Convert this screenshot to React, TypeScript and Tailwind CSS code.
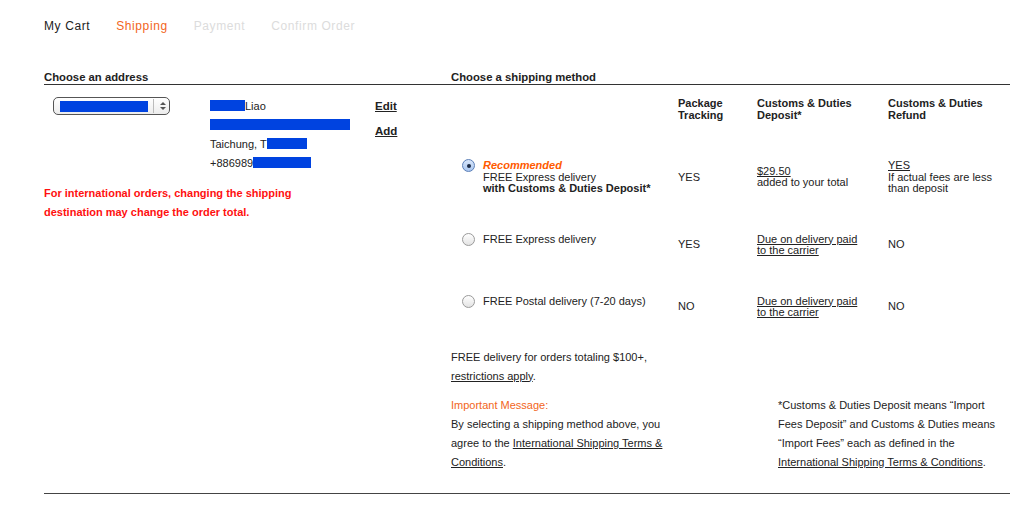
const Blur = ({ w }: { w: number }) => (
  <span className="inline-block h-[11px] bg-[#0043e0] align-[-1px]" style={{ width: w }} />
);

const Radio = ({ checked }: { checked?: boolean }) => (
  <span
    className={
      "mt-[-1px] flex h-[13px] w-[13px] shrink-0 items-center justify-center rounded-full border " +
      (checked
        ? "border-[#5b7fb8] bg-gradient-to-b from-[#d8e6fa] to-[#a9c6f0]"
        : "border-[#9a9a9a] bg-gradient-to-b from-white to-[#e3e3e3]")
    }
  >
    {checked && <span className="h-[4px] w-[4px] rounded-full bg-[#1b2a44]" />}
  </span>
);

const Select = () => (
  <div className="flex h-[18px] w-[117px] items-center rounded-[5px] border border-[#555] bg-gradient-to-b from-white to-[#ececec] pl-[6px]">
    <span className="h-[11px] w-[88px] bg-[#0043e0]" />
    <span className="ml-[5px] h-[14px] w-px bg-[#bbb]" />
    <svg width="8" height="10" viewBox="0 0 8 10" className="ml-[5px]">
      <path d="M1 4 L4 1 L7 4 Z" fill="#555" />
      <path d="M1 6 L4 9 L7 6 Z" fill="#555" />
    </svg>
  </div>
);

const Row = ({
  checked,
  option,
  tracking,
  deposit,
  refund,
}: {
  checked?: boolean;
  option: React.ReactNode;
  tracking: string;
  deposit: React.ReactNode;
  refund: React.ReactNode;
}) => (
  <>
    <div className="flex gap-[8px] self-start pl-[11px]">
      <Radio checked={checked} />
      <div>{option}</div>
    </div>
    <div>{tracking}</div>
    <div>{deposit}</div>
    <div>{refund}</div>
  </>
);

export default function App() {
  return (
    <div className="min-h-[510px] bg-white font-['Liberation_Sans',Arial,sans-serif] text-[#222]">
      <div className="ml-[44px] w-[966px]">
        <nav className="flex gap-[26px] pt-[18px] text-[12px] leading-[16px] tracking-[0.6px]">
          <span className="text-[#222]">My Cart</span>
          <span className="text-[#f26522]">Shipping</span>
          <span className="text-[#dcdcdc]">Payment</span>
          <span className="text-[#dcdcdc]">Confirm Order</span>
        </nav>

        <div className="mt-[36px] flex border-b border-[#444]">
          {/* address column */}
          <div className="w-[407px]">
            <h2 className="border-b border-[#333] text-[11.3px] font-bold leading-[14px]">Choose an address</h2>
            <div className="flex pt-[12px] text-[11px]">
              <div className="w-[166px] pl-[9px]">
                <Select />
              </div>
              <div className="w-[165px] leading-[19px]">
                <div>
                  <Blur w={35} />
                  Liao
                </div>
                <div>
                  <Blur w={140} />
                </div>
                <div>
                  Taichung, T<Blur w={40} />
                </div>
                <div>
                  +886989<Blur w={58} />
                </div>
              </div>
              <div className="text-[11.5px] font-bold leading-[19px] underline">
                <div>Edit</div>
                <div className="mt-[6px]">Add</div>
              </div>
            </div>
            <p className="mt-[11px] w-[262px] text-[11px] font-bold leading-[19px] text-[#ff1010]">
              For international orders, changing the shipping destination may change the order total.
            </p>
          </div>

          {/* shipping column */}
          <div className="flex-1">
            <h2 className="border-b border-[#333] text-[11.3px] font-bold leading-[14px]">Choose a shipping method</h2>
            <div className="grid grid-cols-[227px_79px_131px_1fr] items-center gap-y-[39px] pt-[13px] text-[11px] leading-[11.5px]">
              <div />
              <div className="font-bold">
                Package
                <br />
                Tracking
              </div>
              <div className="font-bold">
                Customs &amp; Duties
                <br />
                Deposit*
              </div>
              <div className="font-bold">
                Customs &amp; Duties
                <br />
                Refund
              </div>

              <Row
                checked
                option={
                  <>
                    <div className="font-bold italic text-[#ff5a00]">Recommended</div>
                    <div>FREE Express delivery</div>
                    <div className="font-bold">with Customs &amp; Duties Deposit*</div>
                  </>
                }
                tracking="YES"
                deposit={
                  <>
                    <div className="underline">$29.50</div>
                    <div>added to your total</div>
                  </>
                }
                refund={
                  <>
                    <div className="underline">YES</div>
                    <div>If actual fees are less</div>
                    <div>than deposit</div>
                  </>
                }
              />
              <Row
                option={<div>FREE Express delivery</div>}
                tracking="YES"
                deposit={
                  <div className="underline">
                    Due on delivery paid
                    <br />
                    to the carrier
                  </div>
                }
                refund="NO"
              />
              <Row
                option={<div>FREE Postal delivery (7-20 days)</div>}
                tracking="NO"
                deposit={
                  <div className="underline">
                    Due on delivery paid
                    <br />
                    to the carrier
                  </div>
                }
                refund="NO"
              />
            </div>

            <div className="mt-[29px] text-[11px] leading-[19px]">
              <p>
                FREE delivery for orders totaling $100+,
                <br />
                <span className="underline">restrictions apply</span>.
              </p>
              <div className="mt-[10px] flex justify-between pb-[21px]">
                <div className="w-[226px]">
                  <div className="text-[#f26522]">Important Message:</div>
                  <p>
                    By selecting a shipping method above, you agree to the{" "}
                    <span className="underline">International Shipping Terms &amp; Conditions</span>.
                  </p>
                </div>
                <p className="mr-[5px] w-[227px]">
                  *Customs &amp; Duties Deposit means “Import Fees Deposit” and Customs &amp; Duties means “Import
                  Fees” each as defined in the{" "}
                  <span className="underline">International Shipping Terms &amp; Conditions</span>.
                </p>
              </div>
            </div>
          </div>
        </div>
      </div>
    </div>
  );
}
